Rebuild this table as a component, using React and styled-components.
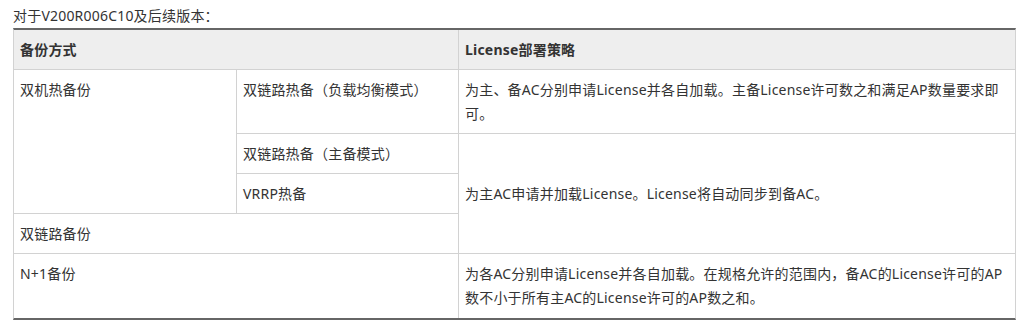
import React from "react";
import styled, { createGlobalStyle } from "styled-components";

const GlobalStyle = createGlobalStyle`
  html, body {
    margin: 0;
    padding: 0;
    background: #fff;
  }
  body {
    font-family: "Noto Sans", "Noto Sans CJK SC", sans-serif;
    font-size: 14px;
    letter-spacing: 0.2px;
    color: #333;
  }
`;

function App() {
  return (
    <Page>
      <GlobalStyle />
      <Caption>对于V200R006C10及后续版本：</Caption>
      <Table>
        <HeadCell $span={2}>备份方式</HeadCell>
        <HeadCell $last>License部署策略</HeadCell>

        <Cell $rows={3}>双机热备份</Cell>
        <Cell>双链路热备（负载均衡模式）</Cell>
        <Cell $last>
          为主、备AC分别申请License并各自加载。主备License许可数之和满足AP数量要求即可。
        </Cell>

        <Cell>双链路热备（主备模式）</Cell>
        <Cell $last $rows={3} $middle>
          为主AC申请并加载License。License将自动同步到备AC。
        </Cell>

        <Cell>VRRP热备</Cell>

        <Cell $span={2}>双链路备份</Cell>

        <Cell $span={2} $bottom>
          N+1备份
        </Cell>
        <Cell $last $bottom>
          为各AC分别申请License并各自加载。在规格允许的范围内，备AC的License许可的AP数不小于所有主AC的License许可的AP数之和。
        </Cell>
      </Table>
    </Page>
  );
}

export default App;

const Page = styled.div`
  padding: 5px 15px 0 13px;
`;

const Caption = styled.div`
  line-height: 21px;
  margin-bottom: 2px;
`;

const Table = styled.div`
  display: grid;
  grid-template-columns: 223px 222px 1fr;
  border-top: 2px solid #666;
  border-bottom: 2px solid #666;
  border-left: 1px solid #d2d2d2;
  border-right: 1px solid #d2d2d2;
`;

const Cell = styled.div`
  grid-column: span ${(p) => p.$span || 1};
  grid-row: span ${(p) => p.$rows || 1};
  display: flex;
  align-items: ${(p) => (p.$middle ? "center" : "flex-start")};
  padding: 8px 6px ${(p) => (p.$bottom ? "8px" : "7px")};
  line-height: 24px;
  border-bottom: ${(p) => (p.$bottom ? "none" : "1px solid #d2d2d2")};
  border-right: ${(p) => (p.$last ? "none" : "1px solid #d2d2d2")};
`;

const HeadCell = styled(Cell)`
  background: #eee;
  font-weight: bold;
`;
